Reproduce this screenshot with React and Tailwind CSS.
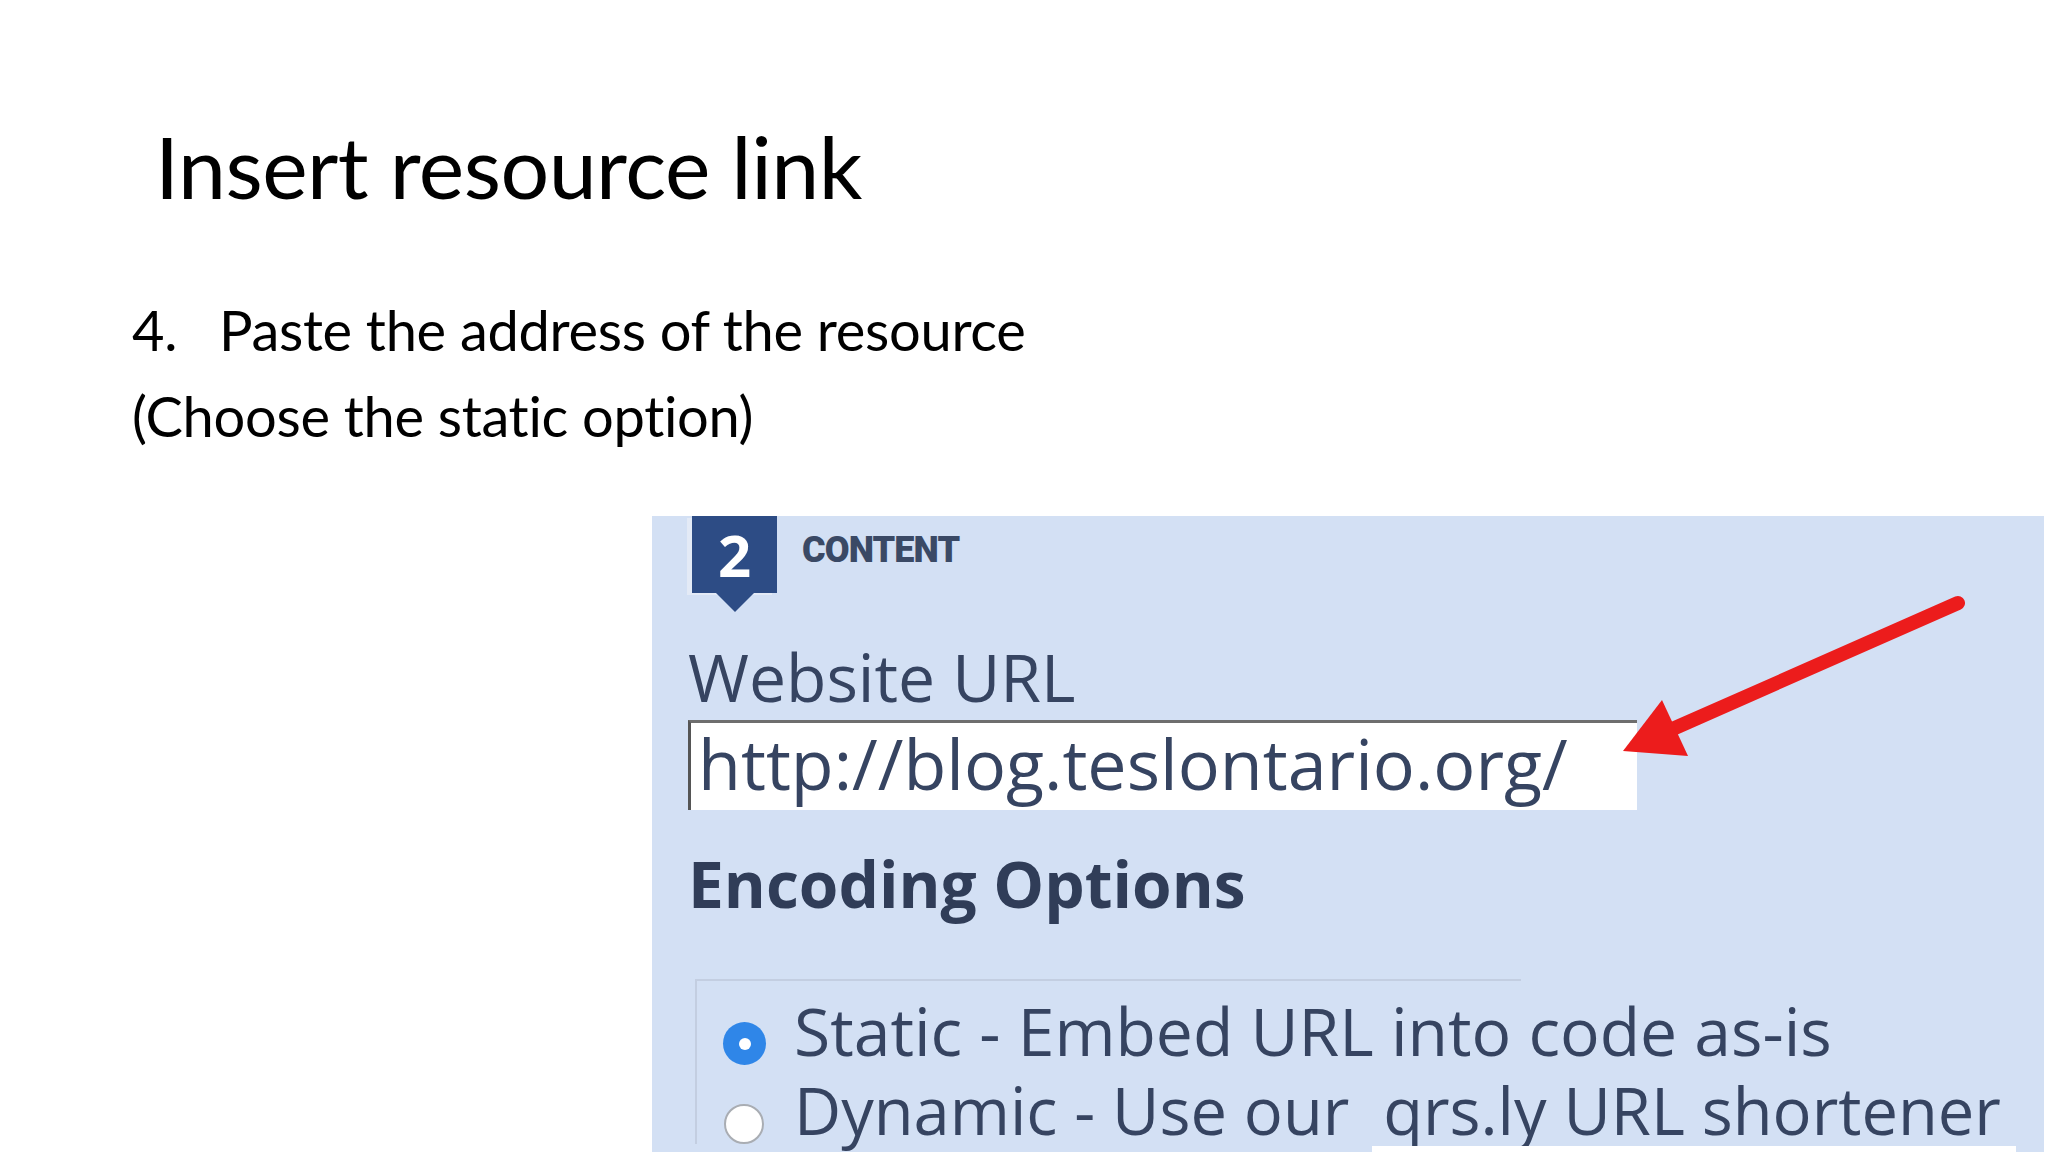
export default function App() {
  return (
    <div className="w-[2048px] h-[1152px] bg-white overflow-hidden font-['Lato',sans-serif] text-black">
      <h1 className="pl-[155px] pt-[123px] text-[86px] leading-none font-normal tracking-[-0.5px]">
        Insert resource link
      </h1>

      <div className="pl-[132px] mt-[78px] text-[56px] leading-[86px] tracking-[-0.3px]">
        <p className="flex">
          <span className="w-[87px]">4.</span>
          <span>Paste the address of the resource</span>
        </p>
        <p>(Choose the static option)</p>
      </div>

      <div className="relative ml-[652px] mt-[57px] w-[1392px] h-[636px] bg-[#d3e0f4] overflow-hidden pl-[36px] font-['Open_Sans',sans-serif] font-medium text-[#364461]">
        {/* step header */}
        <div className="flex items-start h-[96px]">
          <div className="relative shrink-0 ml-[4px] w-[85px] h-[77px] bg-[#2d4c85] flex items-center justify-center shadow-[-5px_2px_0_#e3eaf6]">
            <span className="text-white font-bold text-[58px] leading-none">2</span>
            <div className="absolute left-[24px] top-[77px] border-x-[19px] border-x-transparent border-t-[19px] border-t-[#2d4c85]" />
          </div>
          <span className="ml-[25px] mt-[16px] text-[36px] leading-none font-black font-['Roboto',sans-serif] text-[#3a4965] tracking-tight">
            CONTENT
          </span>
        </div>

        <div className="mt-[31px] text-[66px] leading-none">Website URL</div>

        <div className="mt-[11px] w-[949px] h-[90px] bg-white border-t-[3px] border-l-[3px] border-t-[#6e6e6e] border-l-[#555] pl-[7px] pt-[5px] text-[70px] leading-none">
          http://blog.teslontario.org/
        </div>

        <div className="mt-[42px] text-[64px] leading-none font-bold text-[#303d58]">
          Encoding Options
        </div>

        <div className="mt-[63px] ml-[7px] w-[826px] border-t-2 border-l-2 border-[#c3cee1] pt-[16px] pl-[26px]">
          <div className="flex items-start">
            <div className="shrink-0 mt-[25px] w-[43px] h-[43px] rounded-full bg-[#2f86e8] flex items-center justify-center">
              <div className="w-[12px] h-[12px] rounded-full bg-white" />
            </div>
            <span className="ml-[28px] text-[66px] leading-none whitespace-nowrap">
              Static - Embed URL into code as-is
            </span>
          </div>
          <div className="flex items-start mt-[13px]">
            <div className="shrink-0 mt-[26px] ml-[1px] w-[40px] h-[40px] rounded-full bg-white border-2 border-[#a9adb3]" />
            <span className="ml-[30px] text-[65px] leading-none whitespace-nowrap">
              Dynamic - Use our&nbsp; qrs.ly URL shortener
            </span>
          </div>
        </div>

        <div className="absolute left-[720px] bottom-0 w-[644px] h-[6px] bg-white" />

        <svg className="absolute left-0 top-0" width="1392" height="636" viewBox="0 0 1392 636">
          <line x1="1306" y1="87" x2="1016" y2="215" stroke="#ec1c1c" strokeWidth="14" strokeLinecap="round" />
          <polygon points="971,235 1010,184 1036,240" fill="#ec1c1c" />
        </svg>
      </div>
    </div>
  );
}
